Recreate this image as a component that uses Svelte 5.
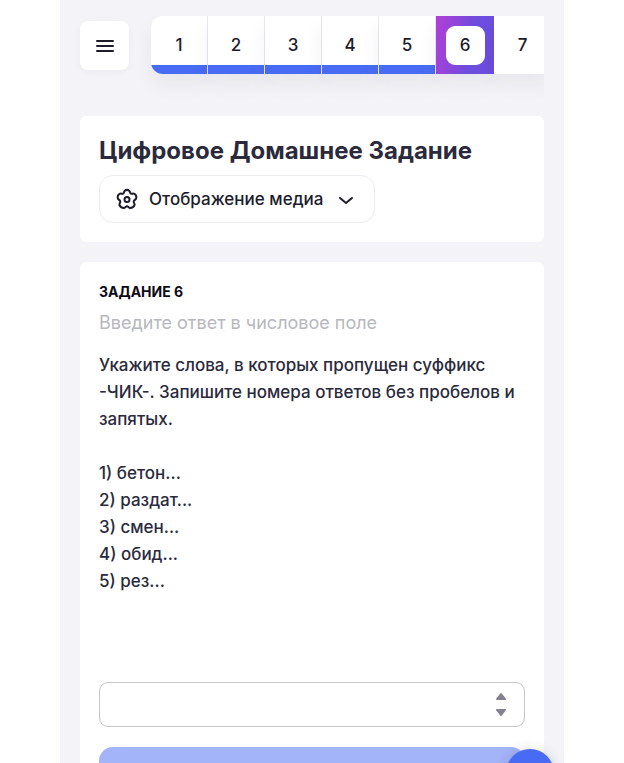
<script lang="ts">
	type Step = { number: number; state: 'done' | 'current' | 'todo' };

	const CURRENT = 6;
	const words = ['бетон', 'раздат', 'смен', 'обид', 'рез'];

	let answer: number | null = $state(null);

	const steps: Step[] = Array.from({ length: 7 }, (_, i) => {
		const number = i + 1;
		return { number, state: number < CURRENT ? 'done' : number === CURRENT ? 'current' : 'todo' };
	});

	function change(delta: number) {
		answer = (answer ?? 0) + delta;
	}
</script>

<div class="app">
	<main class="screen">
		<header class="top">
			<button class="menu" type="button" aria-label="Меню">
				<svg width="20" height="16" viewBox="0 0 20 16" aria-hidden="true">
					<path d="M2 3H18M2 8H18M2 13H18" />
				</svg>
			</button>

			<nav class="steps" aria-label="Задания">
				{#each steps as step (step.number)}
					<button
						class="step step--{step.state}"
						type="button"
						aria-current={step.state === 'current' ? 'step' : undefined}
					>
						<span class="step__number">{step.number}</span>
					</button>
				{/each}
			</nav>
		</header>

		<section class="card card--title">
			<h1>Цифровое Домашнее Задание</h1>
			<button class="media" type="button" aria-expanded="false">
				<svg class="media__gear" width="22" height="22" viewBox="0 0 22 22" aria-hidden="true">
					<path
						d="M8.5 3Q11 0.7 13.5 3C14.1 3.8 13.8 5.2 15 5.7C16.2 6.1 17.2 5.2 18.4 5.8Q21.2 7.8 20 10.8C19.5 11.8 17.9 12.2 17.7 13.4C17.5 14.6 18.8 15.6 18.6 16.9Q17.3 20.1 14.1 20C12.9 19.8 12.3 18.3 11 18.3C9.7 18.3 9.1 19.8 7.9 20Q4.7 20.1 3.4 16.9C3.2 15.6 4.5 14.6 4.3 13.4C4.1 12.2 2.5 11.8 2 10.8Q0.8 7.8 3.6 5.8C4.8 5.2 5.8 6.1 7 5.7C8.2 5.2 7.9 3.8 8.5 3Z"
					/>
					<circle cx="11" cy="11.5" r="2.5" />
				</svg>
				<span>Отображение медиа</span>
				<svg class="media__arrow" width="16" height="16" viewBox="0 0 16 16" aria-hidden="true">
					<path d="M2 7L8 12L14 7" />
				</svg>
			</button>
		</section>

		<section class="card card--task">
			<h2>ЗАДАНИЕ 6</h2>
			<label class="hint" for="answer">Введите ответ в числовое поле</label>

			<div class="text">
				<p>Укажите слова, в которых пропущен суффикс -ЧИК-. Запишите номера ответов без пробелов и запятых.</p>
				<ol>
					{#each words as word, i}
						<li>{i + 1}) {word}...</li>
					{/each}
				</ol>
			</div>

			<div class="field">
				<input id="answer" type="number" bind:value={answer} />
				<div class="field__arrows">
					<button type="button" aria-label="Больше" onclick={() => change(1)}>
						<svg width="12" height="8" viewBox="0 0 12 8" aria-hidden="true">
							<path d="M6 1L10 6H2Z" />
						</svg>
					</button>
					<button type="button" aria-label="Меньше" onclick={() => change(-1)}>
						<svg width="12" height="8" viewBox="0 0 12 8" aria-hidden="true">
							<path d="M2 2H10L6 7Z" />
						</svg>
					</button>
				</div>
			</div>

			<button class="submit" type="button" aria-label="Ответить" disabled></button>
		</section>
	</main>

	<button class="chat" type="button" aria-label="Чат"></button>
</div>

<style>
	:global(body) {
		margin: 0;
		background: #fff;
	}

	.app {
		position: relative;
		box-sizing: border-box;
		max-width: 504px;
		height: 100vh;
		margin: 0 auto;
		overflow: hidden;
		background: #f3f3f8;
		color: #2b2a3d;
		font-family: Inter, 'Noto Sans', sans-serif;
	}

	.screen {
		box-sizing: border-box;
		height: 100%;
		padding: 16px 20px 0;
		overflow-y: auto;
		scrollbar-width: none;
	}

	button {
		padding: 0;
		border: none;
		background: none;
		color: inherit;
		font-family: inherit;
		cursor: pointer;
	}

	svg {
		display: block;
		flex-shrink: 0;
		fill: none;
		stroke: #1d1b2c;
		stroke-width: 2;
		stroke-linecap: round;
		stroke-linejoin: round;
	}

	/* top bar */
	.top {
		display: flex;
		align-items: flex-start;
	}

	.menu {
		display: grid;
		place-items: center;
		flex-shrink: 0;
		width: 49px;
		height: 49px;
		margin-top: 5px;
		border-radius: 8px;
		background: #fff;
		box-shadow: 0 2px 8px rgba(30, 30, 60, 0.04);
	}

	/* padding leaves room for the shadow inside the clipped strip */
	.steps {
		display: flex;
		flex: 1;
		min-width: 0;
		padding: 0 0 42px 22px;
		overflow: hidden;
	}

	.step {
		display: grid;
		place-items: center;
		flex-shrink: 0;
		box-sizing: border-box;
		width: 57px;
		height: 58px;
		background: #fff;
		box-shadow: 0 10px 20px rgba(30, 30, 50, 0.06);
		color: #1d1b2c;
		font-size: 17px;
		font-weight: 500;
	}

	.step:first-child {
		border-radius: 12px 0 0 12px;
	}

	.step--done {
		border-right: 1px solid #e6e8f4;
		background: linear-gradient(#fff 49px, #496bf3 49px);
	}

	.step--current {
		width: 58px;
		background: linear-gradient(100deg, #b13fd6, #6c4ddd 60%);
	}

	.step--current .step__number {
		display: grid;
		place-items: center;
		width: 39px;
		height: 39px;
		border-radius: 9px;
		background: #fff;
	}

	/* cards */
	.card {
		box-sizing: border-box;
		padding: 20px 19px;
		border-radius: 6px;
		background: #fff;
	}

	.card--title {
		padding-bottom: 19px;
	}

	.card + .card {
		margin-top: 20px;
	}

	h1 {
		margin: 0 0 10px;
		font-size: 24px;
		font-weight: 700;
		line-height: 29px;
	}

	.media {
		display: flex;
		align-items: center;
		box-sizing: border-box;
		height: 48px;
		padding: 0 20px 0 16px;
		border: 1px solid #ebebf0;
		border-radius: 14px;
		color: #1d1b2c;
		font-size: 17px;
		font-weight: 500;
	}

	.media__gear {
		margin-right: 11px;
	}

	.media__arrow {
		margin-left: 15px;
	}

	h2 {
		margin: 0;
		color: #0d0c16;
		font-size: 14px;
		font-weight: 700;
		line-height: 20px;
	}

	.hint {
		display: block;
		margin-top: 8px;
		color: #b7b7be;
		font-size: 18px;
		line-height: 26px;
	}

	.text {
		min-height: 310px;
		margin-top: 16px;
		font-size: 17px;
		font-weight: 500;
		line-height: 27px;
	}

	.text p {
		margin: 0 0 27px;
	}

	.text ol {
		margin: 0;
		padding: 0;
		list-style: none;
	}

	/* answer */
	.field {
		display: flex;
		align-items: center;
		box-sizing: border-box;
		height: 45px;
		margin-top: 20px;
		padding-right: 17px;
		border: 1px solid #c6c6ca;
		border-radius: 9px;
	}

	.field input {
		flex: 1;
		min-width: 0;
		height: 100%;
		box-sizing: border-box;
		padding: 0 16px;
		border: none;
		outline: none;
		background: none;
		color: inherit;
		font: inherit;
		font-size: 17px;
		appearance: textfield;
	}

	.field__arrows {
		display: flex;
		flex-direction: column;
		gap: 7px;
	}

	.field__arrows svg {
		fill: #85818f;
		stroke: #85818f;
	}

	.submit {
		display: block;
		width: 100%;
		height: 50px;
		margin-top: 20px;
		border-radius: 14px;
		background: #a4b4f9;
	}

	.chat {
		position: absolute;
		right: 10px;
		bottom: -34px;
		width: 48px;
		height: 48px;
		border-radius: 50%;
		background: #496bf3;
		box-shadow: 0 2px 14px rgba(30, 30, 60, 0.2);
	}
</style>
